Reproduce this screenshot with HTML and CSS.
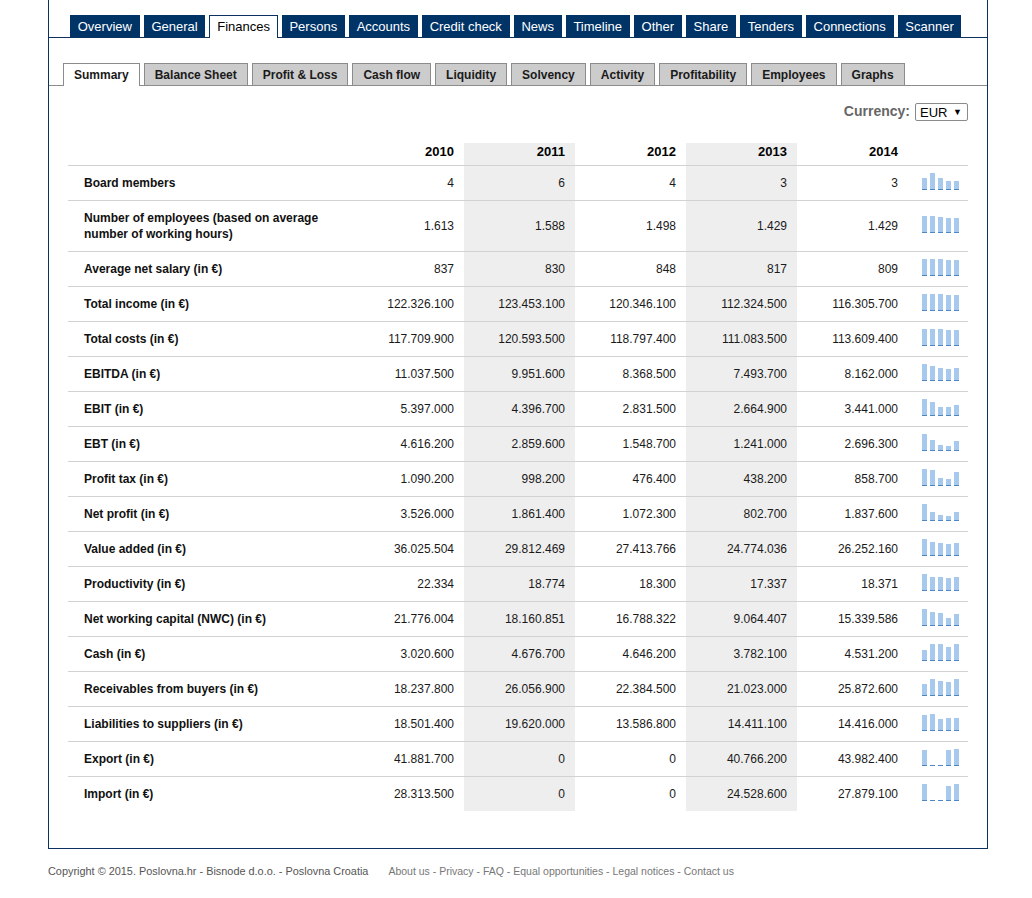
FILE: index.html
```html
<!DOCTYPE html>
<html lang="en">
<head>
<meta charset="utf-8">
<title>Finances - Summary</title>
<link rel="stylesheet" href="styles.css">
</head>
<body>
<div class="page">
  <div class="box">
    <ul class="tabs-main">
      <li class="tab">Overview</li>
      <li class="tab">General</li>
      <li class="tab active">Finances</li>
      <li class="tab">Persons</li>
      <li class="tab">Accounts</li>
      <li class="tab">Credit check</li>
      <li class="tab">News</li>
      <li class="tab">Timeline</li>
      <li class="tab">Other</li>
      <li class="tab">Share</li>
      <li class="tab">Tenders</li>
      <li class="tab">Connections</li>
      <li class="tab">Scanner</li>
    </ul>
    <ul class="tabs-sub">
      <li class="stab active">Summary</li>
      <li class="stab">Balance Sheet</li>
      <li class="stab">Profit &amp; Loss</li>
      <li class="stab">Cash flow</li>
      <li class="stab">Liquidity</li>
      <li class="stab">Solvency</li>
      <li class="stab">Activity</li>
      <li class="stab">Profitability</li>
      <li class="stab">Employees</li>
      <li class="stab">Graphs</li>
    </ul>
    <div class="content">
      <div class="currency-row">
        <span class="currency-label">Currency:</span>
        <span class="select"><span class="select-val">EUR</span><span class="select-arrow">▼</span></span>
      </div>
      <table class="fin">
        <colgroup>
          <col class="c-label"><col class="c-year"><col class="c-year"><col class="c-year"><col class="c-year"><col class="c-year"><col class="c-spark">
        </colgroup>
        <thead>
          <tr>
            <th class="lbl"></th>
            <th>2010</th>
            <th class="alt">2011</th>
            <th>2012</th>
            <th class="alt">2013</th>
            <th>2014</th>
            <th class="spk"></th>
          </tr>
        </thead>
        <tbody>
          <tr>
            <td class="lbl">Board members</td>
            <td>4</td><td class="alt">6</td><td>4</td><td class="alt">3</td><td>3</td>
            <td class="spk"><div class="spark"><i style="height:11px"></i><i style="height:16px"></i><i style="height:11px"></i><i style="height:8px"></i><i style="height:8px"></i></div></td>
          </tr>
          <tr>
            <td class="lbl">Number of employees (based on average number of working hours)</td>
            <td>1.613</td><td class="alt">1.588</td><td>1.498</td><td class="alt">1.429</td><td>1.429</td>
            <td class="spk"><div class="spark"><i style="height:16px"></i><i style="height:16px"></i><i style="height:15px"></i><i style="height:14px"></i><i style="height:14px"></i></div></td>
          </tr>
          <tr>
            <td class="lbl">Average net salary (in €)</td>
            <td>837</td><td class="alt">830</td><td>848</td><td class="alt">817</td><td>809</td>
            <td class="spk"><div class="spark"><i style="height:16px"></i><i style="height:16px"></i><i style="height:16px"></i><i style="height:15px"></i><i style="height:15px"></i></div></td>
          </tr>
          <tr>
            <td class="lbl">Total income (in €)</td>
            <td>122.326.100</td><td class="alt">123.453.100</td><td>120.346.100</td><td class="alt">112.324.500</td><td>116.305.700</td>
            <td class="spk"><div class="spark"><i style="height:16px"></i><i style="height:16px"></i><i style="height:16px"></i><i style="height:15px"></i><i style="height:15px"></i></div></td>
          </tr>
          <tr>
            <td class="lbl">Total costs (in €)</td>
            <td>117.709.900</td><td class="alt">120.593.500</td><td>118.797.400</td><td class="alt">111.083.500</td><td>113.609.400</td>
            <td class="spk"><div class="spark"><i style="height:16px"></i><i style="height:16px"></i><i style="height:16px"></i><i style="height:15px"></i><i style="height:15px"></i></div></td>
          </tr>
          <tr>
            <td class="lbl">EBITDA (in €)</td>
            <td>11.037.500</td><td class="alt">9.951.600</td><td>8.368.500</td><td class="alt">7.493.700</td><td>8.162.000</td>
            <td class="spk"><div class="spark"><i style="height:16px"></i><i style="height:14px"></i><i style="height:12px"></i><i style="height:11px"></i><i style="height:12px"></i></div></td>
          </tr>
          <tr>
            <td class="lbl">EBIT (in €)</td>
            <td>5.397.000</td><td class="alt">4.396.700</td><td>2.831.500</td><td class="alt">2.664.900</td><td>3.441.000</td>
            <td class="spk"><div class="spark"><i style="height:16px"></i><i style="height:13px"></i><i style="height:8px"></i><i style="height:8px"></i><i style="height:10px"></i></div></td>
          </tr>
          <tr>
            <td class="lbl">EBT (in €)</td>
            <td>4.616.200</td><td class="alt">2.859.600</td><td>1.548.700</td><td class="alt">1.241.000</td><td>2.696.300</td>
            <td class="spk"><div class="spark"><i style="height:16px"></i><i style="height:10px"></i><i style="height:5px"></i><i style="height:4px"></i><i style="height:9px"></i></div></td>
          </tr>
          <tr>
            <td class="lbl">Profit tax (in €)</td>
            <td>1.090.200</td><td class="alt">998.200</td><td>476.400</td><td class="alt">438.200</td><td>858.700</td>
            <td class="spk"><div class="spark"><i style="height:16px"></i><i style="height:15px"></i><i style="height:7px"></i><i style="height:6px"></i><i style="height:13px"></i></div></td>
          </tr>
          <tr>
            <td class="lbl">Net profit (in €)</td>
            <td>3.526.000</td><td class="alt">1.861.400</td><td>1.072.300</td><td class="alt">802.700</td><td>1.837.600</td>
            <td class="spk"><div class="spark"><i style="height:16px"></i><i style="height:8px"></i><i style="height:5px"></i><i style="height:4px"></i><i style="height:8px"></i></div></td>
          </tr>
          <tr>
            <td class="lbl">Value added (in €)</td>
            <td>36.025.504</td><td class="alt">29.812.469</td><td>27.413.766</td><td class="alt">24.774.036</td><td>26.252.160</td>
            <td class="spk"><div class="spark"><i style="height:16px"></i><i style="height:13px"></i><i style="height:12px"></i><i style="height:11px"></i><i style="height:12px"></i></div></td>
          </tr>
          <tr>
            <td class="lbl">Productivity (in €)</td>
            <td>22.334</td><td class="alt">18.774</td><td>18.300</td><td class="alt">17.337</td><td>18.371</td>
            <td class="spk"><div class="spark"><i style="height:16px"></i><i style="height:13px"></i><i style="height:13px"></i><i style="height:12px"></i><i style="height:13px"></i></div></td>
          </tr>
          <tr>
            <td class="lbl">Net working capital (NWC) (in €)</td>
            <td>21.776.004</td><td class="alt">18.160.851</td><td>16.788.322</td><td class="alt">9.064.407</td><td>15.339.586</td>
            <td class="spk"><div class="spark"><i style="height:16px"></i><i style="height:13px"></i><i style="height:12px"></i><i style="height:7px"></i><i style="height:11px"></i></div></td>
          </tr>
          <tr>
            <td class="lbl">Cash (in €)</td>
            <td>3.020.600</td><td class="alt">4.676.700</td><td>4.646.200</td><td class="alt">3.782.100</td><td>4.531.200</td>
            <td class="spk"><div class="spark"><i style="height:10px"></i><i style="height:16px"></i><i style="height:16px"></i><i style="height:13px"></i><i style="height:16px"></i></div></td>
          </tr>
          <tr>
            <td class="lbl">Receivables from buyers (in €)</td>
            <td>18.237.800</td><td class="alt">26.056.900</td><td>22.384.500</td><td class="alt">21.023.000</td><td>25.872.600</td>
            <td class="spk"><div class="spark"><i style="height:11px"></i><i style="height:16px"></i><i style="height:14px"></i><i style="height:13px"></i><i style="height:16px"></i></div></td>
          </tr>
          <tr>
            <td class="lbl">Liabilities to suppliers (in €)</td>
            <td>18.501.400</td><td class="alt">19.620.000</td><td>13.586.800</td><td class="alt">14.411.100</td><td>14.416.000</td>
            <td class="spk"><div class="spark"><i style="height:15px"></i><i style="height:16px"></i><i style="height:11px"></i><i style="height:12px"></i><i style="height:12px"></i></div></td>
          </tr>
          <tr>
            <td class="lbl">Export (in €)</td>
            <td>41.881.700</td><td class="alt">0</td><td>0</td><td class="alt">40.766.200</td><td>43.982.400</td>
            <td class="spk"><div class="spark"><i style="height:15px"></i><i style="height:0px"></i><i style="height:0px"></i><i style="height:15px"></i><i style="height:16px"></i></div></td>
          </tr>
          <tr>
            <td class="lbl">Import (in €)</td>
            <td>28.313.500</td><td class="alt">0</td><td>0</td><td class="alt">24.528.600</td><td>27.879.100</td>
            <td class="spk"><div class="spark"><i style="height:16px"></i><i style="height:0px"></i><i style="height:0px"></i><i style="height:14px"></i><i style="height:16px"></i></div></td>
          </tr>
        </tbody>
      </table>
    </div>
  </div>
  <div class="footer">
    <span class="copy">Copyright © 2015. Poslovna.hr - Bisnode d.o.o. - Poslovna Croatia</span>
    <span class="links">About us - Privacy - FAQ - Equal opportunities - Legal notices - Contact us</span>
  </div>
</div>
</body>
</html>
```

FILE: styles.css
```css
html, body {
  margin: 0;
  padding: 0;
  background: #ffffff;
}
body {
  font-family: "Liberation Sans", Arial, sans-serif;
  color: #111;
}
.page {
  width: 940px;
  margin-left: 48px;
}
.box {
  border-left: 1px solid #0b3160;
  border-right: 1px solid #0b3160;
  border-bottom: 1px solid #0b3160;
  padding-bottom: 37px;
}
ul {
  list-style: none;
  margin: 0;
  padding: 0;
}
.tabs-main {
  display: flex;
  gap: 4px;
  padding: 15px 0 0 21px;
  border-bottom: 1px solid #0b3160;
}
.tab {
  background: #003366;
  color: #fff;
  font-size: 13px;
  line-height: 20px;
  height: 20px;
  padding: 1px 6.75px 0 6.75px;
  border: 1px solid #003366;
  border-bottom: 0;
}
.tab.active {
  background: #fff;
  color: #000;
  border-color: #0b3160;
  margin-bottom: -1px;
  height: 21px;
}
.tabs-sub {
  display: flex;
  gap: 4px;
  margin-top: 25px;
  padding-left: 14px;
  border-bottom: 1px solid #8c8c8c;
}
.stab {
  background: #cccccc;
  color: #1a1a1a;
  font-size: 12px;
  font-weight: bold;
  line-height: 20px;
  height: 20px;
  padding: 1px 10px 0 10px;
  border: 1px solid #8c8c8c;
  border-bottom: 0;
}
.stab.active {
  background: #fff;
  height: 21px;
  margin-bottom: -1px;
}
.content {
  padding: 0 19px;
}
.currency-row {
  display: flex;
  justify-content: flex-end;
  align-items: center;
  gap: 5px;
  margin-top: 17px;
  height: 18px;
}
.currency-label {
  font-size: 14px;
  font-weight: bold;
  color: #666;
  padding-bottom: 2px;
}
.select {
  display: flex;
  align-items: center;
  justify-content: space-between;
  box-sizing: border-box;
  width: 53px;
  height: 18px;
  border: 1px solid #8a8a8a;
  border-radius: 2px;
  padding: 0 5px 0 4px;
  font-size: 13px;
  color: #000;
}
.select-arrow {
  font-size: 9px;
}
.fin {
  margin-top: 22px;
  width: 900px;
  border-collapse: collapse;
  table-layout: fixed;
  font-size: 12px;
}
.c-label { width: 285px; }
.c-year { width: 111px; }
.c-spark { width: 60px; }
.fin th {
  font-size: 13px;
  font-weight: bold;
  color: #000;
  text-align: right;
  line-height: 16px;
  padding: 1px 10px 5px 0;
  border-bottom: 1px solid #d2d2d2;
}
.fin td {
  text-align: right;
  line-height: 16px;
  padding: 9px 10px 9px 0;
  border-bottom: 1px solid #d2d2d2;
  color: #1a1a1a;
  vertical-align: middle;
}
.fin tbody tr:last-child td {
  border-bottom: 0;
}
.fin td.lbl {
  text-align: left;
  font-weight: bold;
  color: #111;
  padding-left: 16px;
  padding-right: 20px;
}
.fin .alt {
  background: #eeeeee;
}
.fin td.spk {
  padding: 0 0 0 14px;
  text-align: left;
}
.spark {
  display: flex;
  align-items: flex-end;
  gap: 3px;
  height: 17px;
  margin-bottom: 4px;
}
.spark i {
  display: block;
  width: 5px;
  background: #a7c9ee;
  border-bottom: 1px solid #4d86c0;
}
.footer {
  display: flex;
  align-items: baseline;
  gap: 20px;
  padding-top: 16px;
}
.copy {
  font-size: 10.9px;
  color: #555;
}
.links {
  font-size: 10.5px;
  color: #777;
}
```
